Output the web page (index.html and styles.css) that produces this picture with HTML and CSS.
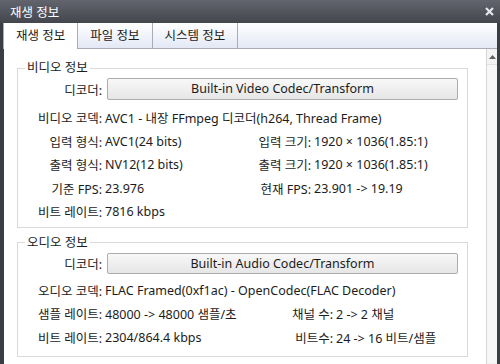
FILE: index.html
```html
<!DOCTYPE html>
<html lang="ko">
<head>
  <meta charset="UTF-8">
  <title>재생 정보</title>
  <link rel="stylesheet" href="styles.css">
</head>
<body>
<div class="window">
  <div class="titlebar">
    <span>재생 정보</span>
    <svg class="close" width="9" height="9" viewBox="0 0 9 9"><path d="M1 1L8 8M8 1L1 8" stroke="#e6e7ea" stroke-width="2.2"/></svg>
  </div>

  <div class="client">
    <div class="tabs">
      <div class="tab active">재생 정보</div>
      <div class="tab">파일 정보</div>
      <div class="tab">시스템 정보</div>
    </div>

    <div class="page">
      <div class="content">
        <fieldset class="group video">
          <legend>비디오 정보</legend>
          <div class="decoder">
            <span class="lbl">디코더:</span>
            <div class="btn">Built-in Video Codec/Transform</div>
          </div>
          <div class="grid">
            <span class="lbl">비디오 코덱:</span><span class="val wide">AVC1 - 내장 FFmpeg 디코더(h264, Thread Frame)</span>
            <span class="lbl">입력 형식:</span><span class="val">AVC1(24 bits)</span>
            <span class="lbl">입력 크기:</span><span class="val">1920 × 1036(1.85:1)</span>
            <span class="lbl">출력 형식:</span><span class="val">NV12(12 bits)</span>
            <span class="lbl">출력 크기:</span><span class="val">1920 × 1036(1.85:1)</span>
            <span class="lbl">기준 FPS:</span><span class="val">23.976</span>
            <span class="lbl">현재 FPS:</span><span class="val">23.901 -&gt; 19.19</span>
            <span class="lbl">비트 레이트:</span><span class="val wide">7816 kbps</span>
          </div>
        </fieldset>

        <fieldset class="group audio">
          <legend>오디오 정보</legend>
          <div class="decoder">
            <span class="lbl">디코더:</span>
            <div class="btn">Built-in Audio Codec/Transform</div>
          </div>
          <div class="grid">
            <span class="lbl">오디오 코덱:</span><span class="val wide">FLAC Framed(0xf1ac) - OpenCodec(FLAC Decoder)</span>
            <span class="lbl">샘플 레이트:</span><span class="val">48000 -&gt; 48000 샘플/초</span>
            <span class="lbl">채널 수:</span><span class="val">2 -&gt; 2 채널</span>
            <span class="lbl">비트 레이트:</span><span class="val">2304/864.4 kbps</span>
            <span class="lbl">비트수:</span><span class="val">24 -&gt; 16 비트/샘플</span>
          </div>
        </fieldset>

        <fieldset class="group sub">
          <legend>자막 정보</legend>
        </fieldset>
      </div>

      <div class="scrollbar">
        <div class="arrow"><svg width="7" height="4" viewBox="0 0 7 4"><path d="M0 4L3.5 0L7 4Z" fill="#606060"/></svg></div>
        <div class="thumb"></div>
      </div>
    </div>
  </div>
</div>
</body>
</html>
```

FILE: styles.css
```css
html, body {
  margin: 0;
  padding: 0;
}
body {
  width: 500px;
  height: 364px;
  overflow: hidden;
  background-color: #3b3d45;
  font-family: "Noto Sans", "Noto Sans CJK KR", sans-serif;
  font-size: 12.5px;
  color: #1c1c1c;
}
.window {
  display: flex;
  flex-direction: column;
  height: 364px;
}
.titlebar {
  flex: none;
  height: 23px;
  display: flex;
  align-items: center;
  justify-content: space-between;
  padding: 0 6px 0 10px;
  background: linear-gradient(#63656e, #44464e);
  color: #fff;
}
.client {
  flex: 1;
  min-height: 0;
  display: flex;
  flex-direction: column;
  margin: 0 3px 0 4px;
  background-color: #fff;
}
.tabs {
  flex: none;
  height: 26px;
  box-sizing: border-box;
  display: flex;
  background: linear-gradient(#ffffff, #e3e8f5);
  border-bottom: 1px solid #a9acb5;
}
.tab {
  padding: 0 12px;
  line-height: 25px;
  border-right: 1px solid #a9acb5;
}
.tab.active {
  background-color: #fff;
  border-left: 1px solid #a9acb5;
  margin-left: -1px;
  margin-bottom: -1px;
}
.page {
  flex: 1;
  min-height: 0;
  display: flex;
  overflow: hidden;
}
.content {
  flex: 1;
  padding: 11px 0 0 13px;
}
.group {
  width: 451px;
  box-sizing: border-box;
  margin: 0;
  padding: 0;
  border: 1px solid #d9d9d9;
}
.group legend {
  margin-left: 7px;
  padding: 0 2px;
  line-height: 16px;
}
.audio {
  margin-top: 7px;
}
.sub {
  margin-top: 8px;
  height: 40px;
}
.decoder {
  display: flex;
  align-items: center;
  margin-top: 2px;
}
.decoder .lbl {
  width: 84px;
  text-align: right;
}
.btn {
  width: 351px;
  height: 22px;
  box-sizing: border-box;
  margin-left: 5px;
  border: 1px solid #acacac;
  border-radius: 2px;
  background: linear-gradient(#f8f8f8, #e6e6e6);
  text-align: center;
  line-height: 20px;
}
.grid {
  display: grid;
  grid-auto-rows: 23.5px;
  column-gap: 3px;
  align-items: center;
}
.video .grid {
  grid-template-columns: 84px 125px 78px 1fr;
  margin-top: 6px;
  padding-bottom: 3px;
}
.audio .decoder .btn {
  height: 21px;
  line-height: 19px;
}
.audio .grid {
  grid-template-columns: 84px 140px 85px 1fr;
  margin-top: 5px;
  padding-bottom: 7px;
}
.lbl {
  text-align: right;
  white-space: nowrap;
}
.val {
  white-space: nowrap;
}
.val.wide {
  grid-column: span 3;
}
.scrollbar {
  flex: none;
  width: 10px;
  display: flex;
  flex-direction: column;
  border-left: 1px solid #d6d6d6;
  background-color: #f3f3f3;
}
.arrow {
  height: 13px;
  display: flex;
  align-items: center;
  justify-content: center;
  margin-top: 1px;
}
.thumb {
  flex: 1;
  margin: 1px 0;
  border-top: 1px solid #e2e2e2;
  background-color: #f7f7f7;
}
```
